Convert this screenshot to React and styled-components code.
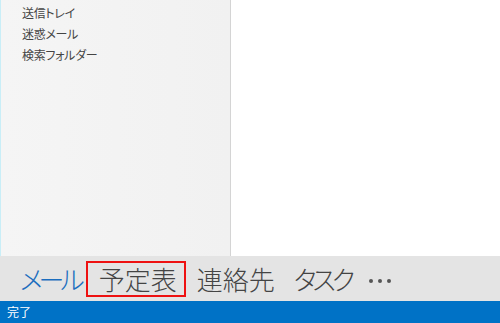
import React from 'react';
import styled, { createGlobalStyle } from 'styled-components';

const GlobalStyle = createGlobalStyle`
  html, body {
    margin: 0;
    padding: 0;
    width: 500px;
    height: 323px;
    overflow: hidden;
  }
  body {
    font-family: "Noto Sans CJK JP", "Noto Sans", sans-serif;
  }
`;

const Shell = styled.div`
  display: grid;
  grid-template-rows: 256px 45px 22px;
  width: 500px;
  height: 323px;
`;

const Workspace = styled.div`
  display: flex;
  min-height: 0;
`;

const FolderPane = styled.div`
  width: 231px;
  flex: none;
  box-sizing: border-box;
  background: linear-gradient(to right, #f5f5f5, #f1f1f1);
  border-left: 1px solid #c9eef7;
  border-right: 1px solid #d4d4d4;
  padding-top: 2px;
`;

const FolderItem = styled.div`
  height: 21px;
  line-height: 21px;
  padding-left: 21px;
  font-size: 12px;
  color: #444;
  font-feature-settings: "palt";
  letter-spacing: -0.3px;
`;

const ContentPane = styled.div`
  flex: 1;
  background: #fff;
`;

const NavBar = styled.div`
  display: flex;
  align-items: center;
  background: #e4e4e4;
  padding-left: 20px;
`;

const NavItem = styled.div`
  box-sizing: border-box;
  height: 36px;
  line-height: 32px;
  font-size: 26px;
  font-weight: 300;
  color: ${p => (p.active ? '#1b6dbe' : '#444')};
  font-feature-settings: "palt";
  letter-spacing: ${p => p.tracking || 0}px;
  margin-right: ${p => p.gap}px;
  padding: 0 ${p => (p.boxed ? '7px 0 11px' : '0')};
  border: ${p => (p.boxed ? '2px solid #ee1111' : '0')};
  ${p => (p.boxed ? '' : 'padding-top: 2px;')}
`;

const More = styled.div`
  display: flex;
  gap: 5px;
  margin-top: 4px;
`;

const Dot = styled.span`
  width: 4px;
  height: 4px;
  border-radius: 50%;
  background: #555;
`;

const StatusBar = styled.div`
  background: #0072c6;
  color: #fff;
  font-size: 12px;
  line-height: 22px;
  padding-left: 7px;
`;

const folders = ['送信トレイ', '迷惑メール', '検索フォルダー'];

const App = () => (
  <>
    <GlobalStyle />
    <Shell>
      <Workspace>
        <FolderPane>
          {folders.map(f => (
            <FolderItem key={f}>{f}</FolderItem>
          ))}
        </FolderPane>
        <ContentPane />
      </Workspace>
      <NavBar>
        <NavItem active gap={5} tracking={-4}>メール</NavItem>
        <NavItem boxed gap={11}>予定表</NavItem>
        <NavItem gap={19}>連絡先</NavItem>
        <NavItem gap={18} tracking={-4}>タスク</NavItem>
        <More>
          <Dot />
          <Dot />
          <Dot />
        </More>
      </NavBar>
      <StatusBar>完了</StatusBar>
    </Shell>
  </>
);

export default App;
